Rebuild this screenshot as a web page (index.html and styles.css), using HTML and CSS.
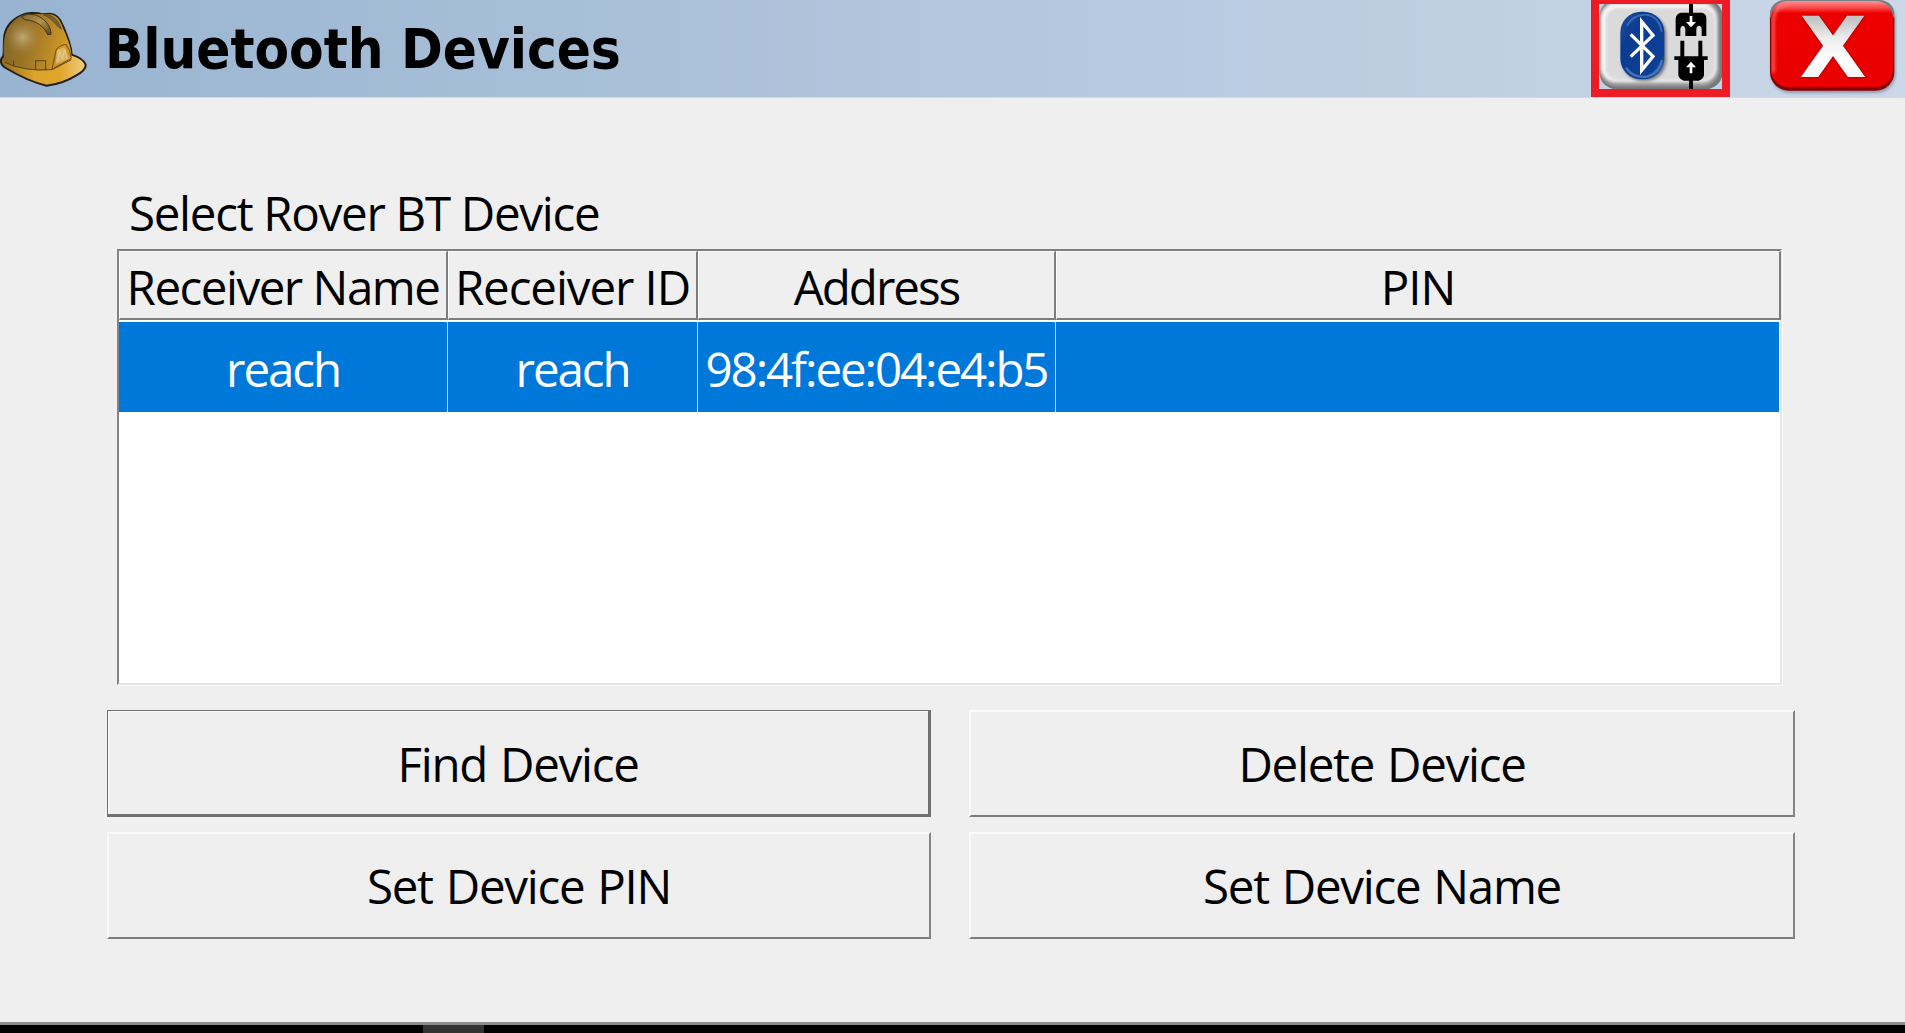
FILE: index.html
```
<!DOCTYPE html>
<html lang="en">
<head>
<meta charset="utf-8">
<title>Bluetooth Devices</title>
<link rel="stylesheet" href="styles.css">
</head>
<body>
<div class="window">
  <header class="titlebar">
    <svg class="helmet" viewBox="0 0 264 264" aria-hidden="true">
      <defs>
        <linearGradient id="shell" x1="0" y1="0" x2="1" y2="0.2">
          <stop offset="0" stop-color="#7d6228"/><stop offset=".45" stop-color="#9c7425"/><stop offset="1" stop-color="#d29a26"/>
        </linearGradient>
        <radialGradient id="shine" cx="68" cy="112" r="58" gradientUnits="userSpaceOnUse">
          <stop offset="0" stop-color="#c2ae80" stop-opacity=".9"/><stop offset="1" stop-color="#a58240" stop-opacity="0"/>
        </radialGradient>
        <linearGradient id="brim" x1="0" y1="0" x2="1" y2="0">
          <stop offset="0" stop-color="#8f6b22"/><stop offset=".4" stop-color="#dca42b"/><stop offset=".7" stop-color="#e0a62c"/><stop offset="1" stop-color="#f0cd80"/>
        </linearGradient>
        <linearGradient id="ridge" x1="0" y1="0" x2="1" y2="1">
          <stop offset="0" stop-color="#7c642f"/><stop offset=".5" stop-color="#b59250"/><stop offset="1" stop-color="#5c4718"/>
        </linearGradient>
      </defs>
      <path d="M10 168C-1 180 1 192 12 201C50 224 95 247 140 257C174 253 202 243 229 226C247 216 258 205 257 194C253 182 236 171 215 164C214 136 202 108 189 78C181 55 168 42 150 41L128 43C107 36 78 38 64 46C35 59 17 82 13 107C10 130 13 148 10 168Z" fill="url(#brim)" stroke="#241f1b" stroke-width="6" stroke-linejoin="round"/>
      <path d="M12 170C10 140 11 115 18 98C30 68 54 46 84 42L150 43C170 45 181 61 187 81C201 111 213 138 214 165C208 181 185 194 157 208C110 217 54 207 14 187Z" fill="url(#shell)"/>
      <circle cx="68" cy="118" r="54" fill="url(#shine)"/>
      <path d="M64 51C78 40 99 41 116 49C139 61 153 81 153 103L143 104C134 82 110 61 75 59Z" fill="url(#ridge)" stroke="#43351a" stroke-width="3"/>
      <path d="M131 45C159 43 176 60 184 88C166 76 160 57 131 45Z" fill="#756334" stroke="#4b3b1b" stroke-width="2"/>
      <path d="M14 187Q72 215 156 209L214 179M41 182V200M107 209V182H137V211" fill="none" stroke="#59431a" stroke-width="3"/>
      <path d="M198 133Q174 137 168 151L156 207M198 133Q212 151 214 175L156 208" fill="none" stroke="#6c4d18" stroke-width="3"/>
      <path d="M171 150L193 142L206 176L167 192Z" fill="#d9b56b"/>
      <path d="M173 184L179 153L187 178L194 148L201 174" fill="none" stroke="#e8cc90" stroke-width="3"/>
    </svg>
    <h1 class="title">Bluetooth Devices</h1>
    <button class="connect" aria-label="Bluetooth connection">
      <svg viewBox="57 12 369 255" aria-hidden="true">
        <defs>
          <linearGradient id="btBlue" x1="0" y1="0" x2="1" y2="1">
            <stop offset="0" stop-color="#1d4d9e"/><stop offset=".3" stop-color="#0a3c92"/><stop offset=".8" stop-color="#0d3f96"/><stop offset="1" stop-color="#4f76b5"/>
          </linearGradient>
          <filter id="soft" x="-10%" y="-10%" width="120%" height="120%"><feGaussianBlur stdDeviation="5"/></filter>
        </defs>
        <rect x="57" y="12" width="369" height="255" fill="#c3d2e6"/>
        <rect x="58" y="-2" width="370" height="270" rx="52" fill="#777"/>
        <rect x="60" y="2" width="357" height="256" rx="50" fill="#a2a2a2" filter="url(#soft)"/>
        <rect x="63" y="10" width="347" height="236" rx="44" fill="#f6f6f6" filter="url(#soft)"/>
        <rect x="77" y="24" width="328" height="217" rx="36" fill="#dadada" filter="url(#soft)"/>
        <rect x="126" y="42" width="133" height="201" rx="62" fill="#454b55" opacity=".65" filter="url(#soft)"/>
        <rect x="121" y="35" width="132" height="203" rx="62" fill="url(#btBlue)"/>
        <path d="M141 77Q160 42 198 44Q238 48 245 96" fill="none" stroke="#547db9" stroke-width="6" opacity=".65"/>
        <path d="M138 203Q160 237 204 229Q240 216 246 180" fill="none" stroke="#5c82ba" stroke-width="7" opacity=".75"/>
        <path d="M152 103L219 169L185 211V65L219 106L152 170" fill="none" stroke="#fff" stroke-width="10"/>
        <path d="M327 10H339V38H366Q379 41 379 55V108H365V86Q363 77 356 77Q350 78 349 86V108H316V86Q314 77 308 77Q302 78 301 86V108H287V55Q289 41 302 38H327Z"/>
        <path d="M301 122H313V169H355V122H367V169H383V180H372V225Q370 238 356 242H339V268H327V242H312Q297 238 295 225V180H283V169H301Z"/>
        <path d="M329 48H337V66H348L333 82L318 66H329Z" fill="#fff"/>
        <path d="M333 185L348 202H337V220H329V202H318Z" fill="#fff"/>
      </svg>
    </button>
    <button class="close" aria-label="Close">
      <svg viewBox="564 0 387 291" aria-hidden="true">
        <defs>
          <linearGradient id="face" x1="0" y1="0" x2="0" y2="1">
            <stop offset="0" stop-color="#ff9292"/><stop offset=".09" stop-color="#fa3d3d"/><stop offset=".14" stop-color="#ed0000"/><stop offset="1" stop-color="#ea0000"/>
          </linearGradient>
          <linearGradient id="xfill" x1="0" y1="0" x2="0" y2="1">
            <stop offset="0.2" stop-color="#c4c4c4"/><stop offset=".4" stop-color="#eee"/><stop offset=".65" stop-color="#fff"/><stop offset="1" stop-color="#e4e4e4"/>
          </linearGradient>
          <filter id="blur" x="-10%" y="-10%" width="120%" height="120%"><feGaussianBlur stdDeviation="4"/></filter>
        </defs>
        <rect x="573" y="3" width="374" height="276" rx="58" fill="#697587" opacity=".6" filter="url(#blur)"/>
        <rect x="570" y="0" width="373" height="272" rx="56" fill="#850000"/>
        <rect x="570" y="0" width="373" height="80" rx="45" fill="#777e88"/>
        <rect x="573" y="3" width="366" height="258" rx="51" fill="url(#face)"/>
        <path d="M580 218V62Q582 14 630 11" fill="none" stroke="#ff8585" stroke-width="8" opacity=".7" filter="url(#blur)"/>
        <text class="cross-shade" x="759" y="230" text-anchor="middle" textLength="203" lengthAdjust="spacingAndGlyphs" filter="url(#blur)">X</text>
        <text class="cross" x="759" y="230" text-anchor="middle" textLength="203" lengthAdjust="spacingAndGlyphs">X</text>
      </svg>
    </button>
  </header>

  <main class="content">
    <h2 class="label">Select Rover BT Device</h2>
    <div class="list">
      <div class="row head">
        <span class="name">Receiver Name</span><span>Receiver ID</span><span class="address">Address</span><span>PIN</span>
      </div>
      <div class="row selected">
        <span>reach</span><span>reach</span><span>98:4f:ee:04:e4:b5</span><span></span>
      </div>
    </div>
    <div class="actions">
      <button class="action default">Find Device</button>
      <button class="action">Delete Device</button>
      <button class="action">Set Device PIN</button>
      <button class="action">Set Device Name</button>
    </div>
  </main>
  <footer class="taskbar"><span class="task"></span></footer>
</div>
</body>
</html>
```
FILE: styles.css
```
* { box-sizing: border-box; }
body {
  margin: 0;
  background: #efefef;
  color: #000;
  font-family: "Open Sans", "Noto Sans", sans-serif;
  font-size: 47.5px;
  letter-spacing: -1.3px;
  overflow: hidden;
}
button { margin: 0; padding: 0; border: 0; color: inherit; font: inherit; letter-spacing: inherit; }
svg { display: block; }
.window { display: flex; flex-direction: column; height: 1033px; }

.titlebar {
  display: flex;
  align-items: flex-start;
  height: 98px;
  padding-right: 8px;
  border-bottom: 1px solid #d2dae4;
  background: linear-gradient(90deg, #99b4d1, #cbd8e8);
}
.helmet { width: 88px; height: 88px; }
.title {
  margin: 0 auto 0 17px;
  font: bold 56px/98px "DejaVu Sans Condensed", "DejaVu Sans", sans-serif;
  letter-spacing: -0.05px;
  white-space: nowrap;
}
.connect {
  width: 139px;
  height: 97px;
  margin-right: 38px;
  border: solid #ed1c24;
  border-width: 4px 8px 8px;
  background: none;
}
.connect svg { width: 123px; height: 85px; }
.close { width: 129px; height: 97px; background: none; }
.close svg { width: 129px; height: 97px; }
.cross, .cross-shade { font: bold 250px "DejaVu Sans", sans-serif; letter-spacing: 0; }
.cross { fill: url(#xfill); }
.cross-shade { fill: #8d0000; }

.content { flex: 1; padding: 81px 110px 0 107px; }
.label {
  height: 70px;
  margin: 0 0 0 22px;
  font-size: inherit;
  font-weight: 400;
  line-height: 67px;
  white-space: nowrap;
}
.list {
  height: 436px;
  width: 1665px;
  margin-left: 10px;
  border: solid;
  border-width: 2px;
  border-color: #7d7d7d #e6e6e6 #e6e6e6 #848484;
  background: #fff;
  box-shadow: 1px 1px #fafafa;
}
.row {
  display: grid;
  grid-template-columns: 329px 250px 358px 1fr;
  text-align: center;
  white-space: nowrap;
}
.head { height: 69px; margin-right: -1px; line-height: 70px; letter-spacing: -1.1px; }
.head span {
  height: 69px;
  background: #efefef;
  border: solid;
  border-width: 1px 2px 2px 1px;
  border-color: #fafafa #7d7d7d #7d7d7d #fafafa;
}
.head .name { letter-spacing: -1.5px; }
.head .address { letter-spacing: -2px; }
.selected {
  height: 92px;
  margin-right: 1px;
  padding-top: 2px;
  line-height: 94px;
  letter-spacing: -2.1px;
  color: #fff;
}
.selected span { height: 90px; background: #0078d9; border-right: 1px solid #b5d8f6; }
.selected span:last-child { border-right: 0; }

.actions {
  display: grid;
  grid-template-columns: 824px 826px;
  grid-auto-rows: 107px;
  gap: 15px 38px;
  margin-top: 25px;
}
.action {
  background: #efefef;
  border: solid;
  border-width: 2px;
  border-color: #fafafa #858585 #7d7d7d #fafafa;
  line-height: 104px;
  word-spacing: 2px;
  white-space: nowrap;
}
.default {
  padding-top: 1px;
  border-width: 1px 3px 3px 1px;
  border-color: #707070;
  box-shadow: inset 1px 1px #fafafa;
}
.taskbar {
  height: 11px;
  padding-left: 423px;
  border-top: 3px solid #8c8c8c;
  background: #000;
}
.task { display: block; width: 61px; height: 8px; background: #333; }
```
